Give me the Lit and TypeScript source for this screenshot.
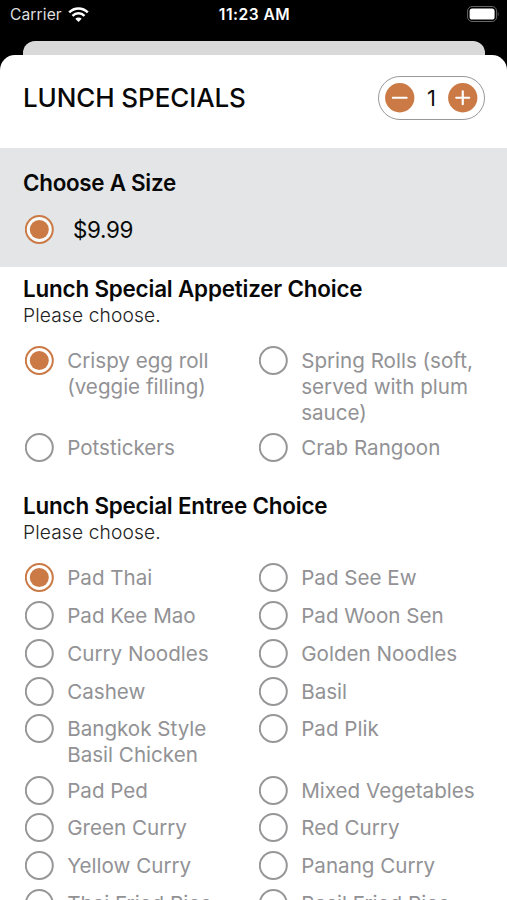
import { LitElement, html, css, svg } from "lit";
import { customElement, property } from "lit/decorators.js";

@customElement("radio-dot")
class RadioDot extends LitElement {
  @property({ type: Boolean }) checked = false;

  static styles = css`
    :host { display: block; width: 29px; height: 29px; flex: none; }
    .icon { display: block; }
    .off { fill: #fff; stroke: #97979a; stroke-width: 2; }
    .on { fill: #fff; fill-opacity: 0.75; stroke: #cb7a45; stroke-width: 2; }
    .core { fill: #cb7a45; }
  `;

  render() {
    return html`<svg class="icon" width="29" height="29" viewBox="0 0 29 29">
      <circle class=${this.checked ? "on" : "off"} cx="14.3" cy="14.5" r="13.5"></circle>
      ${this.checked ? svg`<circle class="core" cx="14.3" cy="14.5" r="9.5"></circle>` : ""}
    </svg>`;
  }
}

@customElement("choice-group")
class ChoiceGroup extends LitElement {
  @property() heading = "";
  @property({ attribute: false }) items: string[] = [];

  static styles = css`
    :host { display: block; }
    .heading { margin: 0 0 0.7px; font-size: 22.4px; line-height: 27px; font-weight: 600; letter-spacing: -0.18px; color: #080808; white-space: nowrap; }
    .hint { margin: 0; font-size: 19.2px; line-height: 26px; font-weight: 300; letter-spacing: 0.12px; color: #222; }
    .grid { display: grid; grid-template-columns: 234px 234px; row-gap: 8.8px; margin: 18px 0 0 1.6px; }
    .item { display: flex; gap: 13.6px; }
    .label { width: 185px; padding-top: 2px; margin-bottom: -1.6px; font-size: 20.6px; line-height: 26px; color: #929295; white-space: pre-line; }
  `;

  render() {
    return html`
      <h2 class="heading">${this.heading}</h2>
      <p class="hint">Please choose.</p>
      <div class="grid">
        ${this.items.map((name, i) => html`<div class="item">
          <radio-dot ?checked=${i === 0}></radio-dot>
          <span class="label">${name}</span>
        </div>`)}
      </div>`;
  }
}

@customElement("app-root")
class AppRoot extends LitElement {
  static styles = css`
    :host { display: block; height: 900px; overflow: hidden; background: #000; font-family: Inter, "Liberation Sans", sans-serif; }
    .status { height: 41px; box-sizing: border-box; padding: 5px 8px 0 10px; display: grid; grid-template-columns: 1fr auto 1fr; align-items: start; color: #fff; font-size: 15.6px; line-height: 20px; }
    .carrier { display: flex; gap: 6px; color: #dedede; letter-spacing: 0.1px; }
    .wifi { margin-top: 2px; }
    .time { font-weight: 600; font-size: 15.6px; letter-spacing: 0.48px; }
    .battery { justify-self: end; }
    .behind { height: 14px; margin: 0 22px 0 23px; background: #d9d9d9; border-radius: 12px 12px 0 0; }
    .sheet { height: 845px; background: #fff; border-radius: 15px 15px 0 0; overflow: hidden; }
    .top { height: 93px; box-sizing: border-box; padding: 21px 22px 0 23px; display: flex; justify-content: space-between; align-items: flex-start; }
    .title { margin: 6.4px 0 0; font-size: 26px; line-height: 32px; font-weight: 550; letter-spacing: -0.1px; color: #080808; }
    .stepper { width: 107px; height: 43.5px; box-sizing: border-box; border: 1.5px solid #98989c; border-radius: 22px; display: flex; align-items: center; justify-content: space-between; padding: 0 6px; }
    .count { font-size: 22px; line-height: 28px; color: #111; }
    .glyph { display: block; }
    .size { height: 119px; box-sizing: border-box; background: #e3e5e6; padding: 21px 23px 0; color: #080808; }
    .sizehead { margin: 0; font-size: 22.4px; line-height: 27px; font-weight: 600; letter-spacing: -0.28px; }
    .price { display: flex; align-items: center; gap: 19.4px; margin: 19px 0 0 1.6px; font-size: 22.4px; line-height: 29px; letter-spacing: -0.35px; }
    .groups { padding: 7.5px 0 0 23px; display: flex; flex-direction: column; gap: 29.2px; }
  `;

  private sign(plus: boolean) {
    return html`<svg class="glyph" width="29.5" height="29.5" viewBox="0 0 30 30">
      <circle cx="15" cy="15" r="14.9" fill="#cb7a45"></circle>
      <path d=${plus ? "M8.4 15H21.6M15 8.4V21.6" : "M8 15H22"} stroke="#fff" stroke-width="2.2" stroke-linecap="round"></path>
    </svg>`;
  }

  render() {
    const appetizers = ["Crispy egg roll\n(veggie filling)", "Spring Rolls (soft,\nserved with plum\nsauce)", "Potstickers", "Crab Rangoon"];
    const entrees = [
      "Pad Thai", "Pad See Ew", "Pad Kee Mao", "Pad Woon Sen",
      "Curry Noodles", "Golden Noodles", "Cashew", "Basil",
      "Bangkok Style\nBasil Chicken", "Pad Plik", "Pad Ped", "Mixed Vegetables",
      "Green Curry", "Red Curry", "Yellow Curry", "Panang Curry",
      "Thai Fried Rice", "Basil Fried Rice",
    ];
    return html`
      <div class="status">
        <span class="carrier">Carrier
          <svg class="wifi" width="21" height="16" viewBox="0 0 21 16" fill="none" stroke="#fff">
            <path d="M1.2 5.3C6.4 .1 14.6 .1 19.8 5.3M4.5 8.8C7.9 5.5 13.1 5.5 16.5 8.8" stroke-width="2.5"></path>
            <path d="M10.5 15L7.3 11.8C9.1 10.2 11.9 10.2 13.7 11.8Z" fill="#fff" stroke="none"></path>
          </svg>
        </span>
        <span class="time">11:23 AM</span>
        <svg class="battery" width="32" height="18" viewBox="0 0 32 18">
          <rect x=".6" y="1.5" width="29" height="15" rx="4.5" fill="none" stroke="#666" stroke-width="1"></rect>
          <rect x="2.6" y="3.5" width="25" height="11" rx="2.6" fill="#fff"></rect>
          <path d="M30.8 6.7Q32.4 9 30.8 11.3Z" fill="#666"></path>
        </svg>
      </div>
      <div class="behind"></div>
      <main class="sheet">
        <header class="top">
          <h1 class="title">LUNCH SPECIALS</h1>
          <div class="stepper">${this.sign(false)}<span class="count">1</span>${this.sign(true)}</div>
        </header>
        <section class="size">
          <h2 class="sizehead">Choose A Size</h2>
          <div class="price"><radio-dot checked></radio-dot><span>$9.99</span></div>
        </section>
        <div class="groups">
          <choice-group heading="Lunch Special Appetizer Choice" .items=${appetizers}></choice-group>
          <choice-group heading="Lunch Special Entree Choice" .items=${entrees}></choice-group>
        </div>
      </main>`;
  }
}
